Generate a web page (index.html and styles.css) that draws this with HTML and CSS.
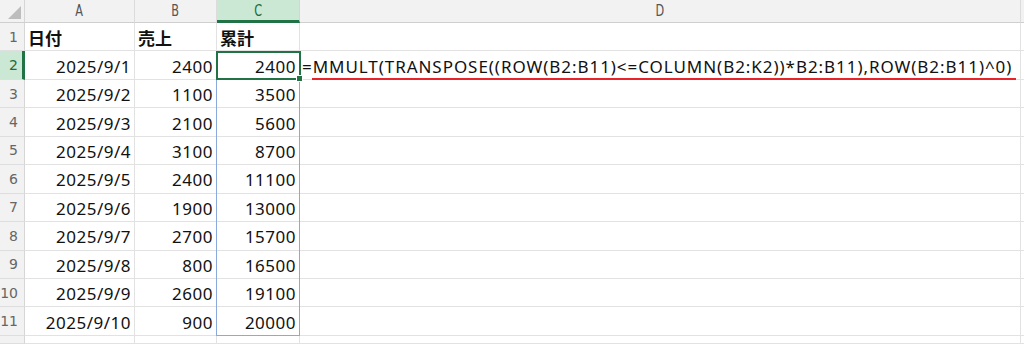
FILE: index.html
```html
<!DOCTYPE html>
<html lang="ja">
<head>
<meta charset="utf-8">
<link rel="stylesheet" href="styles.css">
</head>
<body>
<div class="sheet">
  <div class="corner"><span class="tri"></span></div>
  <div class="colhead"><span class="letter">A</span></div>
  <div class="colhead"><span class="letter">B</span></div>
  <div class="colhead active"><span class="letter">C</span></div>
  <div class="colhead"><span class="letter">D</span></div>
  <div class="colhead edge"></div>

  <div class="rowhead">1</div>
  <div class="cell bold">日付</div>
  <div class="cell bold">売上</div>
  <div class="cell bold">累計</div>
  <div class="cell"></div>
  <div class="cell edge"></div>

  <div class="rowhead active">2</div>
  <div class="cell num">2025/9/1</div>
  <div class="cell num">2400</div>
  <div class="cell num">2400</div>
  <div class="cell formula">=MMULT(TRANSPOSE((ROW(B2:B11)&lt;=COLUMN(B2:K2))*B2:B11),ROW(B2:B11)^0)<span class="redline"></span></div>
  <div class="cell edge"></div>

  <div class="rowhead">3</div>
  <div class="cell num">2025/9/2</div>
  <div class="cell num">1100</div>
  <div class="cell num">3500</div>
  <div class="cell"></div>
  <div class="cell edge"></div>

  <div class="rowhead">4</div>
  <div class="cell num">2025/9/3</div>
  <div class="cell num">2100</div>
  <div class="cell num">5600</div>
  <div class="cell"></div>
  <div class="cell edge"></div>

  <div class="rowhead">5</div>
  <div class="cell num">2025/9/4</div>
  <div class="cell num">3100</div>
  <div class="cell num">8700</div>
  <div class="cell"></div>
  <div class="cell edge"></div>

  <div class="rowhead">6</div>
  <div class="cell num">2025/9/5</div>
  <div class="cell num">2400</div>
  <div class="cell num">11100</div>
  <div class="cell"></div>
  <div class="cell edge"></div>

  <div class="rowhead">7</div>
  <div class="cell num">2025/9/6</div>
  <div class="cell num">1900</div>
  <div class="cell num">13000</div>
  <div class="cell"></div>
  <div class="cell edge"></div>

  <div class="rowhead">8</div>
  <div class="cell num">2025/9/7</div>
  <div class="cell num">2700</div>
  <div class="cell num">15700</div>
  <div class="cell"></div>
  <div class="cell edge"></div>

  <div class="rowhead">9</div>
  <div class="cell num">2025/9/8</div>
  <div class="cell num">800</div>
  <div class="cell num">16500</div>
  <div class="cell"></div>
  <div class="cell edge"></div>

  <div class="rowhead">10</div>
  <div class="cell num">2025/9/9</div>
  <div class="cell num">2600</div>
  <div class="cell num">19100</div>
  <div class="cell"></div>
  <div class="cell edge"></div>

  <div class="rowhead">11</div>
  <div class="cell num">2025/9/10</div>
  <div class="cell num">900</div>
  <div class="cell num">20000</div>
  <div class="cell"></div>
  <div class="cell edge"></div>

  <div class="rowhead"></div>
  <div class="cell"></div>
  <div class="cell"></div>
  <div class="cell"></div>
  <div class="cell"></div>
  <div class="cell edge"></div>

  <div class="spill"></div>
  <div class="selected"><span class="handle"></span></div>
</div>
</body>
</html>
```

FILE: styles.css
```css
html, body {
  margin: 0;
  padding: 0;
  background: #ffffff;
  overflow: hidden;
}

.sheet {
  position: relative;
  display: grid;
  grid-template-columns: 25px 110px 82px 83px 721px 3px;
  grid-template-rows: 23px repeat(11, 28.45px) 1fr;
  width: 1024px;
  height: 344px;
  overflow: hidden;
  font-family: "Noto Sans", "Noto Sans CJK JP", sans-serif;
  color: #111;
}

.corner {
  position: relative;
  background: #f2f2f2;
  border-right: 1px solid #d6d6d6;
  border-bottom: 1px solid #cfcfcf;
  box-sizing: border-box;
}

.tri {
  position: absolute;
  right: 3px;
  bottom: 3px;
  width: 0;
  height: 0;
  border-left: 13px solid transparent;
  border-bottom: 13px solid #bdbdbd;
}

.colhead {
  background: #f2f2f2;
  border-right: 1px solid #dcdcdc;
  border-bottom: 1px solid #cfcfcf;
  box-sizing: border-box;
  display: flex;
  align-items: center;
  justify-content: center;
  color: #555;
  font-family: "DejaVu Sans", sans-serif;
  font-size: 15px;
}

.colhead .letter {
  display: inline-block;
  transform: scaleX(0.75);
}

.colhead.active {
  background: #cbe8d5;
  color: #1e6b3f;
  border-bottom: 3px solid #217346;
  border-right-color: #c4e0cd;
  padding-top: 2px;
}

.colhead.edge {
  border-right: none;
}

.rowhead {
  background: #f2f2f2;
  border-right: 1px solid #d6d6d6;
  border-bottom: 1px solid #dedede;
  box-sizing: border-box;
  display: flex;
  align-items: center;
  justify-content: flex-end;
  padding-right: 6px;
  color: #666;
  font-family: "DejaVu Sans", sans-serif;
  font-size: 14px;
}

.rowhead.active {
  background: #cbe8d5;
  color: #1e6b3f;
  border-right: 3px solid #217346;
  padding-right: 4px;
}

.cell {
  position: relative;
  border-right: 1px solid #e2e2e2;
  border-bottom: 1px solid #e2e2e2;
  box-sizing: border-box;
  display: flex;
  align-items: center;
  padding: 2px 3px 0 4px;
  font-size: 17px;
  white-space: nowrap;
}

.cell.edge {
  border-right: none;
}

.cell.bold {
  font-family: "Noto Sans CJK JP", sans-serif;
  font-weight: bold;
  padding-left: 3px;
}

.cell.num {
  justify-content: flex-end;
  padding-right: 3px;
  letter-spacing: 0.5px;
}

.cell.formula {
  padding-left: 2px;
  letter-spacing: 0.95px;
}

.redline {
  position: absolute;
  left: 12px;
  right: 4px;
  bottom: -1px;
  height: 2px;
  background: #e8242a;
}

.spill {
  position: absolute;
  left: 216px;
  top: 51px;
  width: 84px;
  height: 285px;
  border: 1px solid #8aa9dc;
  box-sizing: border-box;
  pointer-events: none;
}

.selected {
  position: absolute;
  left: 216px;
  top: 51px;
  width: 85px;
  height: 29px;
  border: 2px solid #217346;
  box-sizing: border-box;
}

.handle {
  position: absolute;
  right: -4px;
  bottom: -4px;
  width: 5px;
  height: 5px;
  background: #217346;
  border: 1px solid #ffffff;
}
```
